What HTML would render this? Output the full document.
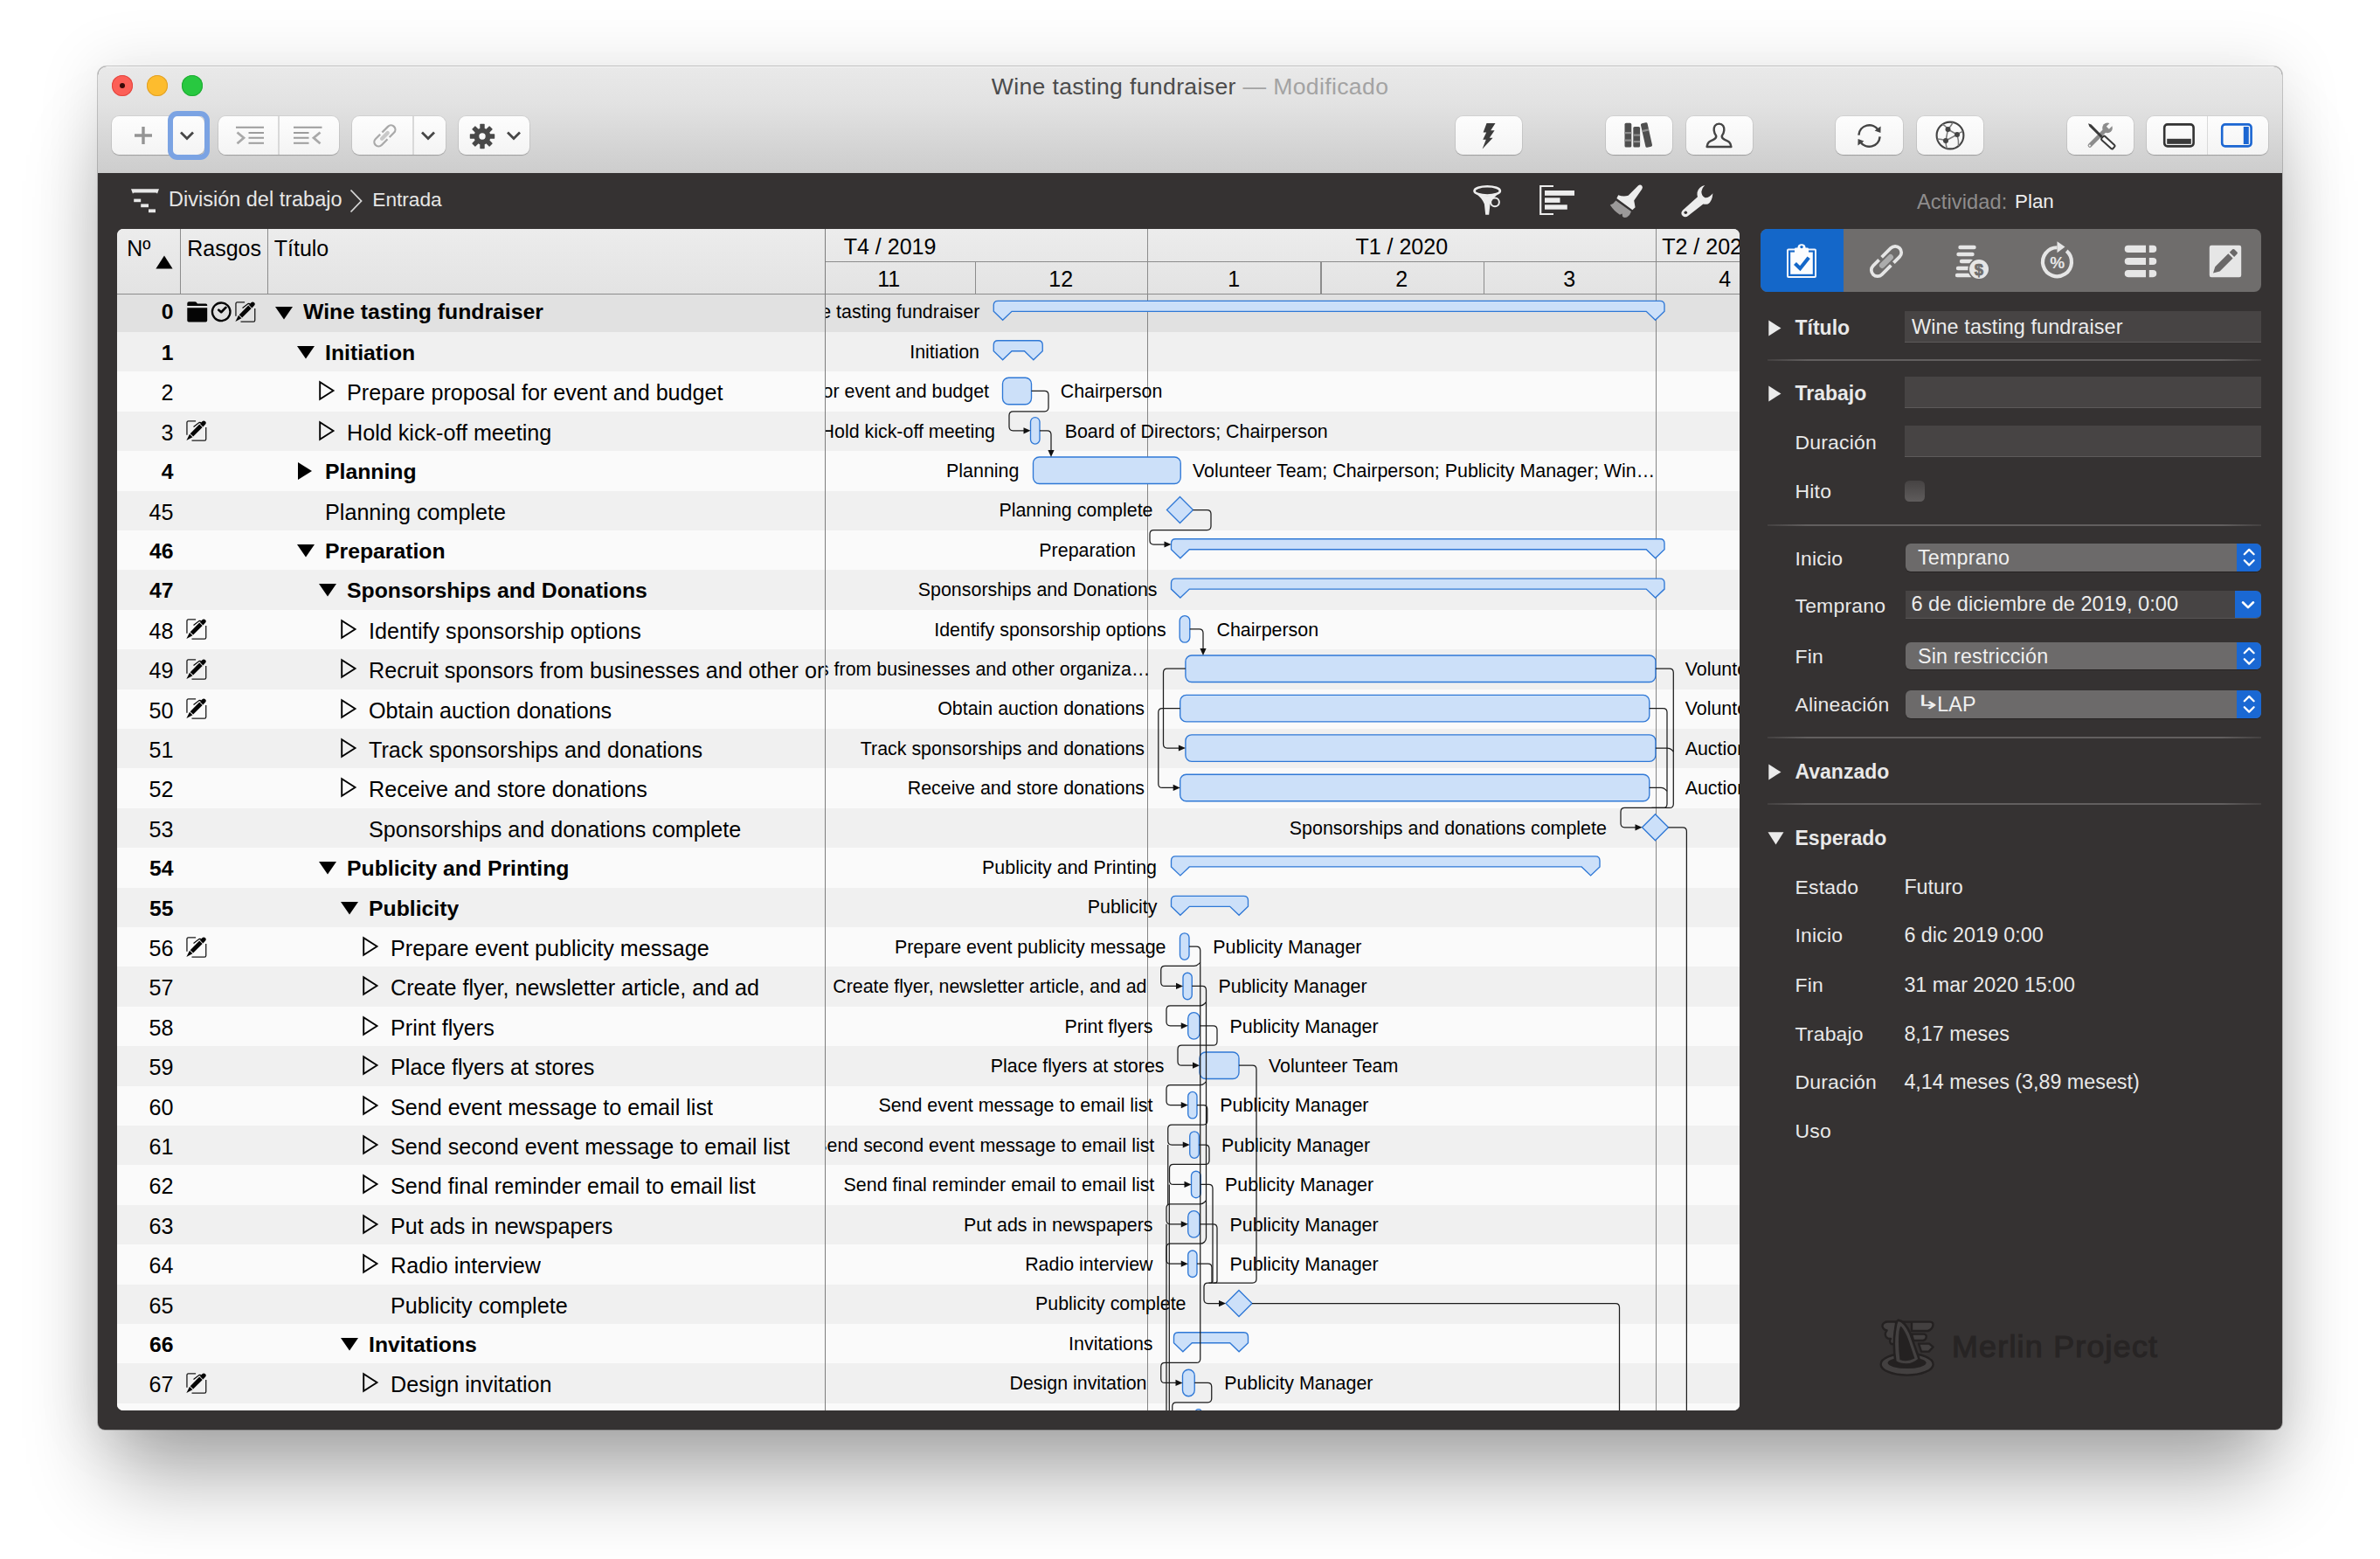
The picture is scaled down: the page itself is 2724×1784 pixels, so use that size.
<!DOCTYPE html>
<html lang="es"><head><meta charset="utf-8"><title>Wine tasting fundraiser</title>
<style>
*{box-sizing:border-box;margin:0;padding:0}
html,body{width:2724px;height:1784px;background:#fff}
body{position:relative;font-family:"Liberation Sans",Arial,sans-serif;color:#000}
.abs{position:absolute}
#win{position:absolute;left:112px;top:76px;width:2500px;height:1559.5px;border-radius:10px 10px 8px 8px;background:#353232;
 box-shadow:0 0 0 1px rgba(0,0,0,.2),0 70px 90px -16px rgba(0,0,0,.32),0 0 70px 4px rgba(0,0,0,.10);overflow:hidden}
#tbar{position:absolute;left:0;top:0;width:2500px;height:121.5px;background:linear-gradient(#e9e9e9 0%,#e2e2e2 35%,#d3d3d3 80%,#cdcdcd 100%);border-top:1px solid #f6f6f6}
.tl{position:absolute;top:86px;width:24px;height:24px;border-radius:12px}
#title{position:absolute;left:112px;width:2500px;top:82px;height:34px;line-height:34px;text-align:center;font-size:26.6px;letter-spacing:.35px;color:#4b4b4b;white-space:nowrap}
#title span{color:#a3a3a3}
.btn{position:absolute;top:133px;height:44px;border-radius:8.5px;background:linear-gradient(#fdfdfd,#f4f4f4);box-shadow:0 0 0 1px rgba(0,0,0,.06),0 1px 1px rgba(0,0,0,.2)}
.sep{position:absolute;top:133px;height:44px;width:1.5px;background:#d9d9d9}
.bi{position:absolute;overflow:visible}
#panel{position:absolute;left:134.25px;top:262px;width:1856.25px;height:1352.4px;border-radius:7px;background:#fafafa;overflow:hidden}
#hdr{position:absolute;left:0;top:0;width:100%;height:75px;background:linear-gradient(#ececec,#e3e3e3);border-bottom:1.5px solid #8c8c8c;z-index:3}
.hl{position:absolute;background:#8c8c8c}
.ht{position:absolute;font-size:25px;line-height:30px;white-space:nowrap;color:#000}
.row{position:absolute;left:0;width:1856.25px;height:45.4px;background:#fafafa;font-size:25.15px;line-height:45.4px;white-space:nowrap}
.row.odd{background:#f0f0f0}
.row.sel{background:#e1e1e1}
.row.bd{font-weight:bold;font-size:24.75px}
.row .n{position:absolute;right:1792px;top:2px}
.row .t{position:absolute;top:2px;overflow:hidden}
.row.bd .n,.row.bd .t{top:1px}
.row.sel .n,.row.sel .t{top:-.3px}
.row .ic{position:absolute;top:10.5px}
.row .tr{position:absolute}
.row svg.tr[height="16"]{top:15px}
.row svg.tr[height="22"]{top:11.5px}
.row svg.tr[height="24"]{top:10px}
#gantt{position:absolute;left:810.25px;top:0;width:1046px;height:1352.4px;overflow:hidden}
#gantt svg.g{position:absolute;left:0;top:75px}
.b{fill:#cce0f9;stroke:#2f78d6;stroke-width:1.35}
.l{fill:none;stroke:#1c1c1c;stroke-width:1.25}
.a{fill:#111}
.gl,.gr{position:absolute;margin-top:0.8px;font-size:21.42px;line-height:45.4px;white-space:nowrap;color:#000}
.vl{position:absolute;top:0;width:1.5px;height:1352.4px;background:#7d7d7d;z-index:4}
/* inspector */
.il{position:absolute;left:2054.5px;font-size:22.95px;line-height:30px;color:#e9e9e9;white-space:nowrap;letter-spacing:.2px}
.il.b{font-weight:bold;font-size:23px;letter-spacing:0}
.iv{position:absolute;left:2179.4px;font-size:23.3px;line-height:30px;color:#e9e9e9;white-space:nowrap;letter-spacing:0}
.fld{position:absolute;left:2180px;width:408px;height:35.5px;background:#474444;border-bottom:1px solid #5d5a5a;font-size:23.4px;line-height:36px;color:#ececec;padding-left:8px;letter-spacing:.1px;white-space:nowrap}
.pop{position:absolute;left:2181px;width:407px;height:31.5px;border-radius:6px;background:#6c6a6a;font-size:23.3px;line-height:32px;color:#f0f0f0;padding-left:14px;overflow:hidden;white-space:nowrap;letter-spacing:.2px;box-shadow:0 1px 0 rgba(0,0,0,.3)}
.pop i{position:absolute;right:0;top:0;width:28.5px;height:100%;background:#1a68d3}
.isep{position:absolute;left:2023px;width:565px;height:2px;background:linear-gradient(90deg,rgba(98,95,95,.3),#625f5f 8%,#625f5f 92%,rgba(98,95,95,.3))}
.itri{position:absolute;left:2023.5px}
</style></head><body>
<div id="win"><div id="tbar"></div></div>
<div class="tl" style="left:128px;background:#fc5f57;box-shadow:inset 0 0 0 1px #e2463f"></div>
<div class="abs" style="left:137px;top:95px;width:6px;height:6px;border-radius:3px;background:#3a0a08"></div>
<div class="tl" style="left:168px;background:#fdbc2e;box-shadow:inset 0 0 0 1px #e0a028"></div>
<div class="tl" style="left:208px;background:#28c840;box-shadow:inset 0 0 0 1px #1fab33"></div>
<div id="title">Wine tasting fundraiser <span>— Modificado</span></div>

<!-- toolbar buttons -->
<div class="btn" style="left:127.5px;width:106.5px"></div>
<div class="abs" style="left:192px;top:127px;width:47.5px;height:56px;border:6px solid #7ba3e3;border-radius:11px"></div>
<div class="btn" style="left:249.5px;width:138.5px"></div><div class="sep" style="left:318px"></div>
<div class="btn" style="left:403px;width:107px"></div><div class="sep" style="left:472px"></div>
<div class="btn" style="left:525px;width:80.75px"></div>
<div class="btn" style="left:1665.75px;width:76.25px"></div>
<div class="btn" style="left:1837.5px;width:76.5px"></div>
<div class="btn" style="left:1929.5px;width:76.5px"></div>
<div class="btn" style="left:2101.25px;width:76.75px"></div>
<div class="btn" style="left:2194px;width:76px"></div>
<div class="btn" style="left:2365.75px;width:76.25px"></div>
<div class="btn" style="left:2457.25px;width:138.75px"></div><div class="sep" style="left:2525.5px"></div>
<!-- plus -->
<svg class="bi" style="left:151px;top:142px" width="26" height="26" viewBox="0 0 26 26"><path d="M13 3 V23 M3 13 H23" stroke="#949494" stroke-width="3.4" fill="none"/></svg>
<!-- chevrons -->
<svg class="bi" style="left:203px;top:147px" width="22" height="16" viewBox="0 0 22 16"><path d="M4 4.6 L11 11.6 L18 4.6" stroke="#474747" stroke-width="2.8" fill="none"/></svg>
<svg class="bi" style="left:478.5px;top:147px" width="22" height="16" viewBox="0 0 22 16"><path d="M4 4.6 L11 11.6 L18 4.6" stroke="#474747" stroke-width="2.8" fill="none"/></svg>
<svg class="bi" style="left:577px;top:146.5px" width="22" height="16" viewBox="0 0 22 16"><path d="M4 4.6 L11 11.6 L18 4.6" stroke="#474747" stroke-width="2.8" fill="none"/></svg>
<!-- indent -->
<svg class="bi" style="left:268px;top:142px" width="36" height="26" viewBox="0 0 36 26"><g stroke="#9c9c9c" stroke-width="2" fill="none"><path d="M2 3.8 H34 M16.5 10 H34 M16.5 15.7 H34 M16.5 21.8 H34"/><path d="M3.5 9.5 L11 15.8 L3.5 22.2" stroke="#a9a9a9" stroke-width="2.8"/></g></svg>
<!-- outdent -->
<svg class="bi" style="left:333.8px;top:142px" width="36" height="26" viewBox="0 0 36 26"><g stroke="#9c9c9c" stroke-width="2" fill="none"><path d="M2 3.8 H34.5 M2 10 H19.5 M2 15.7 H19.5 M2 21.8 H19.5"/><path d="M32.5 9.5 L25 15.8 L32.5 22.2" stroke="#a9a9a9" stroke-width="2.8"/></g></svg>
<!-- link grey -->
<svg class="bi" style="left:423.6px;top:138.8px" width="32.8" height="32.8" viewBox="0 0 36 36"><g transform="rotate(-45 18 18)"><rect x="1.6" y="12.6" width="32.8" height="10.8" rx="5.4" fill="none" stroke="#a9a9a9" stroke-width="2.5"/><rect x="15.2" y="10" width="3.4" height="5" fill="#f9f9f9"/><rect x="17.4" y="21" width="3.4" height="5" fill="#f9f9f9"/><rect x="10.5" y="15.6" width="15" height="4.8" rx="2.4" fill="#c9c9c9"/></g></svg>
<!-- gear -->
<svg class="bi" style="left:536.5px;top:140.5px" width="30" height="30" viewBox="-15 -15 30 30"><g fill="#484848"><rect x="-2.7" y="-14.2" width="5.4" height="7" rx="0.6" transform="rotate(0)"/><rect x="-2.7" y="-14.2" width="5.4" height="7" rx="0.6" transform="rotate(45)"/><rect x="-2.7" y="-14.2" width="5.4" height="7" rx="0.6" transform="rotate(90)"/><rect x="-2.7" y="-14.2" width="5.4" height="7" rx="0.6" transform="rotate(135)"/><rect x="-2.7" y="-14.2" width="5.4" height="7" rx="0.6" transform="rotate(180)"/><rect x="-2.7" y="-14.2" width="5.4" height="7" rx="0.6" transform="rotate(225)"/><rect x="-2.7" y="-14.2" width="5.4" height="7" rx="0.6" transform="rotate(270)"/><rect x="-2.7" y="-14.2" width="5.4" height="7" rx="0.6" transform="rotate(315)"/></g><circle r="6.6" fill="none" stroke="#484848" stroke-width="5.8"/></svg>
<!-- lightning -->
<svg class="bi" style="left:1692px;top:139px" width="24" height="33" viewBox="0 0 24 33"><path d="M9.5 2 L19.5 2 L14.2 10.2 L18.6 10.2 L12.8 18.8 L16.6 18.8 L4.6 31.5 L8.8 20.8 L5.2 20.8 L9.2 12.6 L5.6 12.6 Z" fill="#3c3c3c"/></svg>
<!-- books -->
<svg class="bi" style="left:1858px;top:139px" width="36" height="32" viewBox="0 0 36 32"><g fill="#4f4f4f"><rect x="1.5" y="1.8" width="7.8" height="27.8" rx="1.6"/><rect x="11.3" y="6" width="7.8" height="23.6" rx="1.6"/><rect x="22.6" y="1.4" width="7.8" height="28.2" rx="1.6" transform="rotate(-12.5 26.5 15.6)"/><rect x="22.6" y="9" width="7.8" height="2.2" fill="#8c8c8c" transform="rotate(-12.5 26.5 15.6)"/></g><g fill="#8c8c8c"><rect x="1.5" y="12" width="7.8" height="2.2"/><rect x="1.5" y="20.5" width="7.8" height="2.2"/><rect x="11.3" y="14.5" width="7.8" height="2.2"/><rect x="11.3" y="22" width="7.8" height="2.2"/></g></svg>
<!-- person -->
<svg class="bi" style="left:1951px;top:139px" width="33" height="32" viewBox="0 0 33 32"><path d="M16.5 2.6 C12.2 2.6 10.3 6 10.7 10.2 C11 13.4 12.2 15.2 13.2 16.4 C13.6 18.6 12.6 19.6 10 20.8 C6 22.6 3.2 23.6 2.6 29 H30.4 C29.8 23.6 27 22.6 23 20.8 C20.4 19.6 19.4 18.6 19.8 16.4 C20.8 15.2 22 13.4 22.3 10.2 C22.7 6 20.8 2.6 16.5 2.6 Z" fill="none" stroke="#444" stroke-width="2.4" stroke-linejoin="round"/></svg>
<!-- refresh -->
<svg class="bi" style="left:2123px;top:139px" width="33" height="33" viewBox="0 0 33 33"><g fill="none" stroke="#444" stroke-width="2.5"><path d="M4.4 15.6 A12.2 12.2 0 0 1 26.8 9.8"/><path d="M28.6 17.4 A12.2 12.2 0 0 1 6.2 23.2"/></g><path d="M29.6 5.6 L29.4 13 L22.6 10.6 Z M3.4 27.4 L3.6 20 L10.4 22.4 Z" fill="#444"/></svg>
<!-- network globe -->
<svg class="bi" style="left:2214px;top:137px" width="36" height="36" viewBox="0 0 36 36"><g fill="none" stroke="#444" stroke-width="2.1"><circle cx="18" cy="18" r="15.4"/><path stroke="#7a7a7a" stroke-width="1.5" d="M15.5 11 L26 17 M15.5 11 L13 24 M26 17 L13 24 M15.5 11 Q12 6 9 5.5 M15.5 11 Q20 6 21 3 M26 17 Q30 14 32.5 13.5 M26 17 Q28 24 27.5 30 M13 24 Q8 22 3.5 22 M13 24 Q13 30 14.5 33"/></g><g fill="#444"><circle cx="15.5" cy="11" r="3"/><circle cx="26" cy="17" r="3"/><circle cx="13" cy="24" r="3"/></g></svg>
<!-- tools -->
<svg class="bi" style="left:2387px;top:139px" width="34" height="33" viewBox="0 0 34 33"><path d="M5 27.4 L21 11.4" stroke="#8c8c8c" stroke-width="4.8" stroke-linecap="round" fill="none"/><circle cx="25" cy="7.4" r="5.8" fill="#8c8c8c"/><rect x="22.9" y="-1" width="4.4" height="8" fill="#f9f9f9" transform="rotate(45 25 7.4)"/><circle cx="4.8" cy="27.6" r="1.1" fill="#f9f9f9"/><path d="M3 2.2 L6.6 3.6 L19.6 16.8 L17.6 18.8 L4.4 5.8 Z" fill="#3a3a3a"/><g transform="rotate(42.5 19 17.8)"><rect x="19.5" y="15" width="17.5" height="5.6" rx="1.4" fill="#fbfbfb" stroke="#3a3a3a" stroke-width="2"/></g></svg>
<!-- bottom panel -->
<svg class="bi" style="left:2474px;top:139px" width="40" height="32" viewBox="0 0 40 32"><rect x="3.2" y="3.4" width="33.4" height="25" rx="3.6" fill="none" stroke="#333" stroke-width="2.6"/><rect x="6.2" y="19.8" width="27.6" height="6" fill="#3a3a3a"/></svg>
<!-- right panel -->
<svg class="bi" style="left:2540px;top:139px" width="40" height="32" viewBox="0 0 40 32"><rect x="3.2" y="3.4" width="33.4" height="25" rx="3.6" fill="none" stroke="#1b66d2" stroke-width="2.6"/><rect x="27.8" y="6" width="6" height="20" fill="#1b66d2"/></svg>


<!-- dark bar -->
<!-- WBS icon -->
<svg class="abs" style="left:149px;top:214px" width="34" height="32" viewBox="0 0 34 32"><g fill="#e8e8e8"><path d="M1 2.2 H33 L31 7.8 Q30.6 6.6 29 6.6 H5 Q3.4 6.6 3 7.8 Z"/><rect x="4.2" y="13.6" width="8" height="3.6"/><rect x="12.2" y="19.4" width="8.8" height="3.8"/><rect x="21" y="25.4" width="8" height="3.8"/></g></svg>
<!-- funnel -->
<svg class="abs" style="left:1684px;top:210px" width="38" height="38" viewBox="0 0 38 38"><g fill="none" stroke="#ededed"><ellipse cx="18.2" cy="8.4" rx="14.7" ry="5.1" stroke-width="2.6"/><circle cx="27" cy="21.3" r="4.9" stroke-width="2"/></g><path d="M3.4 10 Q10 14.2 18.2 14.2 Q26.4 14.2 33 10 Q24 16.5 21.5 23.5 L20.2 35.7 H16.2 L14.9 23.5 Q12.4 16.5 3.4 10 Z" fill="#ededed"/></svg>
<!-- gantt bars -->
<svg class="abs" style="left:1760px;top:210px" width="44" height="38" viewBox="0 0 44 38"><path d="M18 3 H3.2 V35 H18" fill="none" stroke="#ededed" stroke-width="2.2"/><g fill="#ededed"><rect x="8" y="8" width="34" height="5.8"/><rect x="8" y="16.3" width="17.5" height="5.6"/><rect x="8" y="24.3" width="25.8" height="5.4"/></g></svg>
<!-- brush -->
<svg class="abs" style="left:1841px;top:210px" width="42" height="42" viewBox="0 0 42 42"><path d="M33.9 2.4 Q36.4 0.6 38.2 2.6 Q39.6 4.4 38.4 6.2 L29.2 19.6 L30.6 27.2 L27.4 30.2 L9.4 17 L11.2 13.2 Q17 15.6 22.6 13.8 Z" fill="#ededed"/><path d="M8.4 19.4 L26 32 Q24.6 36.6 21.2 38.6 Q18 39.8 16 37.8 L15.6 34.4 L13 35.8 Q6.4 31.8 1.8 24.6 Q6 23 8.4 19.4 Z" fill="#9b9999"/></svg>
<!-- wrench -->
<svg class="abs" style="left:1921px;top:209px" width="42" height="42" viewBox="0 0 42 42"><path d="M30.3 3 Q23.4 4.4 21.6 11 Q21.2 14 22 16.2 L5 31.4 Q1.8 34.8 4.8 38 Q8 40.8 11.4 37.8 L28.4 24.6 Q31 25.2 33.8 24.4 Q38.6 21.8 39.4 12.2 Q35 17.6 30.6 17.2 Q26 15 26.4 10 Q27 5.8 30.3 3 Z" fill="#ededed"/><circle cx="8.3" cy="34.2" r="1.8" fill="#353232"/></svg>

<div class="abs" style="left:193px;top:213px;font-size:23.5px;line-height:30px;color:#e6e6e6;white-space:nowrap">División del trabajo</div>
<svg class="abs" style="left:399px;top:215px" width="18" height="30" viewBox="0 0 18 30"><path d="M2.5 2.5 L14.5 15 L2.5 27.5" fill="none" stroke="#d6d6d6" stroke-width="1.8"/></svg>
<div class="abs" style="left:426.25px;top:213px;font-size:22.7px;line-height:30px;color:#e6e6e6;white-space:nowrap">Entrada</div>
<div class="abs" style="left:2194px;top:216px;font-size:23.6px;line-height:30px;color:#8f8d8d;white-space:nowrap;letter-spacing:.1px">Actividad:</div>
<div class="abs" style="left:2306px;top:216px;font-size:22.4px;line-height:30px;color:#ededed;white-space:nowrap">Plan</div>

<!-- table + gantt panel -->
<div id="panel">
<div class="row sel bd" style="top:72.6px"><span class="n">0</span><svg class="ic" style="left:79.5px" width="24" height="24" viewBox="0 0 24 24"><path d="M0.3 2.2 Q0.3 0.3 2.2 0.3 H9 Q10.5 0.3 11.2 1.4 L12 2.5 H21.6 Q23.2 2.5 23.2 4 V4.9 H0.3 Z M0.3 7.3 H23.2 V21.8 Q23.2 23.6 21.4 23.6 H2.1 Q0.3 23.6 0.3 21.8 Z" fill="#050505"/></svg><svg class="ic" style="left:107.2px" width="24" height="24" viewBox="0 0 24 24"><circle cx="12.2" cy="11.8" r="10.3" fill="none" stroke="#050505" stroke-width="2.3"/><path d="M9.3 9.8 L12.2 12.2 L17.4 6.9" fill="none" stroke="#050505" stroke-width="2.7" stroke-linecap="round" stroke-linejoin="round"/></svg><svg class="ic" style="left:135.2px" width="24" height="24" viewBox="0 0 24 24"><path d="M0.95 16.8 V2.6 Q0.95 0.95 2.6 0.95 H11.1 M22.75 8 V21.4 Q22.75 23.05 21.1 23.05 H6.5" fill="none" stroke="#1a1a1a" stroke-width="1.3"/><g transform="translate(0.4 22.9) rotate(-45)" fill="#050505"><path d="M0 0 L7.5 -2.45 V2.45 Z"/><rect x="8.5" y="-2.45" width="14.9" height="4.9"/><path d="M24.4 -2.45 H28 A2.45 2.45 0 0 1 28 2.45 H24.4 Z"/><path d="M16.7 -5.2 L25 -4.1 L26.4 -2.3" fill="none" stroke="#050505" stroke-width="1.3"/></g></svg><svg class="tr" style="left:179.8px" width="22" height="16" viewBox="0 0 22 16"><path d="M1 1 H21 L11 15.5 Z" fill="#000"/></svg><span class="t" style="left:212.8px;max-width:596.8px">Wine tasting fundraiser</span></div>
<div class="row odd bd" style="top:118.0px"><span class="n">1</span><svg class="tr" style="left:204.8px" width="22" height="16" viewBox="0 0 22 16"><path d="M1 1 H21 L11 15.5 Z" fill="#000"/></svg><span class="t" style="left:237.8px;max-width:571.8px">Initiation</span></div>
<div class="row" style="top:163.4px"><span class="n">2</span><svg class="tr" style="left:230.2px" width="20" height="24" viewBox="0 0 20 24"><path d="M2.2 2.2 V21.8 L17.5 12 Z" fill="none" stroke="#000" stroke-width="1.9" stroke-linejoin="miter"/></svg><span class="t" style="left:262.8px;max-width:546.8px">Prepare proposal for event and budget</span></div>
<div class="row odd" style="top:208.8px"><span class="n">3</span><svg class="ic" style="left:79.2px" width="24" height="24" viewBox="0 0 24 24"><path d="M0.95 16.8 V2.6 Q0.95 0.95 2.6 0.95 H11.1 M22.75 8 V21.4 Q22.75 23.05 21.1 23.05 H6.5" fill="none" stroke="#1a1a1a" stroke-width="1.3"/><g transform="translate(0.4 22.9) rotate(-45)" fill="#050505"><path d="M0 0 L7.5 -2.45 V2.45 Z"/><rect x="8.5" y="-2.45" width="14.9" height="4.9"/><path d="M24.4 -2.45 H28 A2.45 2.45 0 0 1 28 2.45 H24.4 Z"/><path d="M16.7 -5.2 L25 -4.1 L26.4 -2.3" fill="none" stroke="#050505" stroke-width="1.3"/></g></svg><svg class="tr" style="left:230.2px" width="20" height="24" viewBox="0 0 20 24"><path d="M2.2 2.2 V21.8 L17.5 12 Z" fill="none" stroke="#000" stroke-width="1.9" stroke-linejoin="miter"/></svg><span class="t" style="left:262.8px;max-width:546.8px">Hold kick-off meeting</span></div>
<div class="row bd" style="top:254.2px"><span class="n">4</span><svg class="tr" style="left:205.8px" width="18" height="22" viewBox="0 0 18 22"><path d="M1 1 V21 L17 11 Z" fill="#000"/></svg><span class="t" style="left:237.8px;max-width:571.8px">Planning</span></div>
<div class="row odd" style="top:299.6px"><span class="n">45</span><span class="t" style="left:237.8px;max-width:571.8px">Planning complete</span></div>
<div class="row bd" style="top:345.0px"><span class="n">46</span><svg class="tr" style="left:204.8px" width="22" height="16" viewBox="0 0 22 16"><path d="M1 1 H21 L11 15.5 Z" fill="#000"/></svg><span class="t" style="left:237.8px;max-width:571.8px">Preparation</span></div>
<div class="row odd bd" style="top:390.4px"><span class="n">47</span><svg class="tr" style="left:229.8px" width="22" height="16" viewBox="0 0 22 16"><path d="M1 1 H21 L11 15.5 Z" fill="#000"/></svg><span class="t" style="left:262.8px;max-width:546.8px">Sponsorships and Donations</span></div>
<div class="row" style="top:435.8px"><span class="n">48</span><svg class="ic" style="left:79.2px" width="24" height="24" viewBox="0 0 24 24"><path d="M0.95 16.8 V2.6 Q0.95 0.95 2.6 0.95 H11.1 M22.75 8 V21.4 Q22.75 23.05 21.1 23.05 H6.5" fill="none" stroke="#1a1a1a" stroke-width="1.3"/><g transform="translate(0.4 22.9) rotate(-45)" fill="#050505"><path d="M0 0 L7.5 -2.45 V2.45 Z"/><rect x="8.5" y="-2.45" width="14.9" height="4.9"/><path d="M24.4 -2.45 H28 A2.45 2.45 0 0 1 28 2.45 H24.4 Z"/><path d="M16.7 -5.2 L25 -4.1 L26.4 -2.3" fill="none" stroke="#050505" stroke-width="1.3"/></g></svg><svg class="tr" style="left:255.2px" width="20" height="24" viewBox="0 0 20 24"><path d="M2.2 2.2 V21.8 L17.5 12 Z" fill="none" stroke="#000" stroke-width="1.9" stroke-linejoin="miter"/></svg><span class="t" style="left:287.8px;max-width:521.8px">Identify sponsorship options</span></div>
<div class="row odd" style="top:481.2px"><span class="n">49</span><svg class="ic" style="left:79.2px" width="24" height="24" viewBox="0 0 24 24"><path d="M0.95 16.8 V2.6 Q0.95 0.95 2.6 0.95 H11.1 M22.75 8 V21.4 Q22.75 23.05 21.1 23.05 H6.5" fill="none" stroke="#1a1a1a" stroke-width="1.3"/><g transform="translate(0.4 22.9) rotate(-45)" fill="#050505"><path d="M0 0 L7.5 -2.45 V2.45 Z"/><rect x="8.5" y="-2.45" width="14.9" height="4.9"/><path d="M24.4 -2.45 H28 A2.45 2.45 0 0 1 28 2.45 H24.4 Z"/><path d="M16.7 -5.2 L25 -4.1 L26.4 -2.3" fill="none" stroke="#050505" stroke-width="1.3"/></g></svg><svg class="tr" style="left:255.2px" width="20" height="24" viewBox="0 0 20 24"><path d="M2.2 2.2 V21.8 L17.5 12 Z" fill="none" stroke="#000" stroke-width="1.9" stroke-linejoin="miter"/></svg><span class="t" style="left:287.8px;max-width:521.8px">Recruit sponsors from businesses and other organizations</span></div>
<div class="row" style="top:526.6px"><span class="n">50</span><svg class="ic" style="left:79.2px" width="24" height="24" viewBox="0 0 24 24"><path d="M0.95 16.8 V2.6 Q0.95 0.95 2.6 0.95 H11.1 M22.75 8 V21.4 Q22.75 23.05 21.1 23.05 H6.5" fill="none" stroke="#1a1a1a" stroke-width="1.3"/><g transform="translate(0.4 22.9) rotate(-45)" fill="#050505"><path d="M0 0 L7.5 -2.45 V2.45 Z"/><rect x="8.5" y="-2.45" width="14.9" height="4.9"/><path d="M24.4 -2.45 H28 A2.45 2.45 0 0 1 28 2.45 H24.4 Z"/><path d="M16.7 -5.2 L25 -4.1 L26.4 -2.3" fill="none" stroke="#050505" stroke-width="1.3"/></g></svg><svg class="tr" style="left:255.2px" width="20" height="24" viewBox="0 0 20 24"><path d="M2.2 2.2 V21.8 L17.5 12 Z" fill="none" stroke="#000" stroke-width="1.9" stroke-linejoin="miter"/></svg><span class="t" style="left:287.8px;max-width:521.8px">Obtain auction donations</span></div>
<div class="row odd" style="top:572.0px"><span class="n">51</span><svg class="tr" style="left:255.2px" width="20" height="24" viewBox="0 0 20 24"><path d="M2.2 2.2 V21.8 L17.5 12 Z" fill="none" stroke="#000" stroke-width="1.9" stroke-linejoin="miter"/></svg><span class="t" style="left:287.8px;max-width:521.8px">Track sponsorships and donations</span></div>
<div class="row" style="top:617.4px"><span class="n">52</span><svg class="tr" style="left:255.2px" width="20" height="24" viewBox="0 0 20 24"><path d="M2.2 2.2 V21.8 L17.5 12 Z" fill="none" stroke="#000" stroke-width="1.9" stroke-linejoin="miter"/></svg><span class="t" style="left:287.8px;max-width:521.8px">Receive and store donations</span></div>
<div class="row odd" style="top:662.8px"><span class="n">53</span><span class="t" style="left:287.8px;max-width:521.8px">Sponsorships and donations complete</span></div>
<div class="row bd" style="top:708.2px"><span class="n">54</span><svg class="tr" style="left:229.8px" width="22" height="16" viewBox="0 0 22 16"><path d="M1 1 H21 L11 15.5 Z" fill="#000"/></svg><span class="t" style="left:262.8px;max-width:546.8px">Publicity and Printing</span></div>
<div class="row odd bd" style="top:753.6px"><span class="n">55</span><svg class="tr" style="left:254.8px" width="22" height="16" viewBox="0 0 22 16"><path d="M1 1 H21 L11 15.5 Z" fill="#000"/></svg><span class="t" style="left:287.8px;max-width:521.8px">Publicity</span></div>
<div class="row" style="top:799.0px"><span class="n">56</span><svg class="ic" style="left:79.2px" width="24" height="24" viewBox="0 0 24 24"><path d="M0.95 16.8 V2.6 Q0.95 0.95 2.6 0.95 H11.1 M22.75 8 V21.4 Q22.75 23.05 21.1 23.05 H6.5" fill="none" stroke="#1a1a1a" stroke-width="1.3"/><g transform="translate(0.4 22.9) rotate(-45)" fill="#050505"><path d="M0 0 L7.5 -2.45 V2.45 Z"/><rect x="8.5" y="-2.45" width="14.9" height="4.9"/><path d="M24.4 -2.45 H28 A2.45 2.45 0 0 1 28 2.45 H24.4 Z"/><path d="M16.7 -5.2 L25 -4.1 L26.4 -2.3" fill="none" stroke="#050505" stroke-width="1.3"/></g></svg><svg class="tr" style="left:280.2px" width="20" height="24" viewBox="0 0 20 24"><path d="M2.2 2.2 V21.8 L17.5 12 Z" fill="none" stroke="#000" stroke-width="1.9" stroke-linejoin="miter"/></svg><span class="t" style="left:312.8px;max-width:496.8px">Prepare event publicity message</span></div>
<div class="row odd" style="top:844.4px"><span class="n">57</span><svg class="tr" style="left:280.2px" width="20" height="24" viewBox="0 0 20 24"><path d="M2.2 2.2 V21.8 L17.5 12 Z" fill="none" stroke="#000" stroke-width="1.9" stroke-linejoin="miter"/></svg><span class="t" style="left:312.8px;max-width:496.8px">Create flyer, newsletter article, and ad</span></div>
<div class="row" style="top:889.8px"><span class="n">58</span><svg class="tr" style="left:280.2px" width="20" height="24" viewBox="0 0 20 24"><path d="M2.2 2.2 V21.8 L17.5 12 Z" fill="none" stroke="#000" stroke-width="1.9" stroke-linejoin="miter"/></svg><span class="t" style="left:312.8px;max-width:496.8px">Print flyers</span></div>
<div class="row odd" style="top:935.2px"><span class="n">59</span><svg class="tr" style="left:280.2px" width="20" height="24" viewBox="0 0 20 24"><path d="M2.2 2.2 V21.8 L17.5 12 Z" fill="none" stroke="#000" stroke-width="1.9" stroke-linejoin="miter"/></svg><span class="t" style="left:312.8px;max-width:496.8px">Place flyers at stores</span></div>
<div class="row" style="top:980.6px"><span class="n">60</span><svg class="tr" style="left:280.2px" width="20" height="24" viewBox="0 0 20 24"><path d="M2.2 2.2 V21.8 L17.5 12 Z" fill="none" stroke="#000" stroke-width="1.9" stroke-linejoin="miter"/></svg><span class="t" style="left:312.8px;max-width:496.8px">Send event message to email list</span></div>
<div class="row odd" style="top:1026.0px"><span class="n">61</span><svg class="tr" style="left:280.2px" width="20" height="24" viewBox="0 0 20 24"><path d="M2.2 2.2 V21.8 L17.5 12 Z" fill="none" stroke="#000" stroke-width="1.9" stroke-linejoin="miter"/></svg><span class="t" style="left:312.8px;max-width:496.8px">Send second event message to email list</span></div>
<div class="row" style="top:1071.4px"><span class="n">62</span><svg class="tr" style="left:280.2px" width="20" height="24" viewBox="0 0 20 24"><path d="M2.2 2.2 V21.8 L17.5 12 Z" fill="none" stroke="#000" stroke-width="1.9" stroke-linejoin="miter"/></svg><span class="t" style="left:312.8px;max-width:496.8px">Send final reminder email to email list</span></div>
<div class="row odd" style="top:1116.8px"><span class="n">63</span><svg class="tr" style="left:280.2px" width="20" height="24" viewBox="0 0 20 24"><path d="M2.2 2.2 V21.8 L17.5 12 Z" fill="none" stroke="#000" stroke-width="1.9" stroke-linejoin="miter"/></svg><span class="t" style="left:312.8px;max-width:496.8px">Put ads in newspapers</span></div>
<div class="row" style="top:1162.2px"><span class="n">64</span><svg class="tr" style="left:280.2px" width="20" height="24" viewBox="0 0 20 24"><path d="M2.2 2.2 V21.8 L17.5 12 Z" fill="none" stroke="#000" stroke-width="1.9" stroke-linejoin="miter"/></svg><span class="t" style="left:312.8px;max-width:496.8px">Radio interview</span></div>
<div class="row odd" style="top:1207.6px"><span class="n">65</span><span class="t" style="left:312.8px;max-width:496.8px">Publicity complete</span></div>
<div class="row bd" style="top:1253.0px"><span class="n">66</span><svg class="tr" style="left:254.8px" width="22" height="16" viewBox="0 0 22 16"><path d="M1 1 H21 L11 15.5 Z" fill="#000"/></svg><span class="t" style="left:287.8px;max-width:521.8px">Invitations</span></div>
<div class="row odd" style="top:1298.4px"><span class="n">67</span><svg class="ic" style="left:79.2px" width="24" height="24" viewBox="0 0 24 24"><path d="M0.95 16.8 V2.6 Q0.95 0.95 2.6 0.95 H11.1 M22.75 8 V21.4 Q22.75 23.05 21.1 23.05 H6.5" fill="none" stroke="#1a1a1a" stroke-width="1.3"/><g transform="translate(0.4 22.9) rotate(-45)" fill="#050505"><path d="M0 0 L7.5 -2.45 V2.45 Z"/><rect x="8.5" y="-2.45" width="14.9" height="4.9"/><path d="M24.4 -2.45 H28 A2.45 2.45 0 0 1 28 2.45 H24.4 Z"/><path d="M16.7 -5.2 L25 -4.1 L26.4 -2.3" fill="none" stroke="#050505" stroke-width="1.3"/></g></svg><svg class="tr" style="left:280.2px" width="20" height="24" viewBox="0 0 20 24"><path d="M2.2 2.2 V21.8 L17.5 12 Z" fill="none" stroke="#000" stroke-width="1.9" stroke-linejoin="miter"/></svg><span class="t" style="left:312.8px;max-width:496.8px">Design invitation</span></div>
<div class="row" style="top:1343.8px"></div>
<div id="hdr">
 <div class="hl" style="left:71.5px;top:0;width:1.5px;height:75px"></div>
 <div class="hl" style="left:171.5px;top:0;width:1.5px;height:75px"></div>
 <div class="ht" style="left:11px;top:6.6px">Nº</div>
 <svg class="abs" style="left:44px;top:30px" width="20" height="16" viewBox="0 0 20 16"><path d="M10 0.5 L19.6 15.5 H0.4 Z" fill="#000"/></svg>
 <div class="ht" style="left:80px;top:7px">Rasgos</div>
 <div class="ht" style="left:179.5px;top:7px">Título</div>
 <!-- gantt header -->
 <div class="hl" style="left:810.25px;top:36.6px;width:1046px;height:1.5px"></div>
 <div class="hl" style="left:1178.25px;top:0;width:1.5px;height:75px"></div>
 <div class="hl" style="left:1760.5px;top:0;width:1.5px;height:75px"></div>
 <div class="hl" style="left:981.25px;top:37px;width:1.5px;height:38px"></div>
 <div class="hl" style="left:1377px;top:37px;width:1.5px;height:38px"></div>
 <div class="hl" style="left:1563.25px;top:37px;width:1.5px;height:38px"></div>
 <div class="ht" style="left:831.5px;top:5.2px">T4 / 2019</div>
 <div class="ht" style="left:1179px;width:582px;text-align:center;top:5.2px">T1 / 2020</div>
 <div class="ht" style="left:1768px;top:5.2px">T2 / 2020</div>
 <div class="ht" style="left:833px;width:100px;text-align:center;top:41.5px">11</div>
 <div class="ht" style="left:1030px;width:100px;text-align:center;top:41.5px">12</div>
 <div class="ht" style="left:1228px;width:100px;text-align:center;top:41.5px">1</div>
 <div class="ht" style="left:1420px;width:100px;text-align:center;top:41.5px">2</div>
 <div class="ht" style="left:1612px;width:100px;text-align:center;top:41.5px">3</div>
 <div class="ht" style="left:1790px;width:100px;text-align:center;top:41.5px">4</div>
</div>
<div id="gantt">
<div class="vl" style="left:368px;background:#858585;z-index:0"></div>
<div class="vl" style="left:950.25px;background:#858585;z-index:0"></div>
<span class="gl" style="top:72.6px;right:869.2px">Wine tasting fundraiser</span>
<span class="gl" style="top:118.0px;right:869.5px">Initiation</span>
<span class="gl" style="top:163.4px;right:858.5px">Prepare proposal for event and budget</span>
<span class="gl" style="top:208.8px;right:851.5px">Hold kick-off meeting</span>
<span class="gl" style="top:254.2px;right:824.1px">Planning</span>
<span class="gl" style="top:299.6px;right:671.0px">Planning complete</span>
<span class="gl" style="top:345.0px;right:690.5px">Preparation</span>
<span class="gl" style="top:390.4px;right:666.0px">Sponsorships and Donations</span>
<span class="gl" style="top:435.8px;right:655.9px">Identify sponsorship options</span>
<span class="gl" style="top:481.2px;right:674.2px">Recruit sponsors from businesses and other organiza…</span>
<span class="gl" style="top:526.6px;right:680.5px">Obtain auction donations</span>
<span class="gl" style="top:572.0px;right:680.5px">Track sponsorships and donations</span>
<span class="gl" style="top:617.4px;right:680.5px">Receive and store donations</span>
<span class="gl" style="top:662.8px;right:151.7px">Sponsorships and donations complete</span>
<span class="gl" style="top:708.2px;right:666.5px">Publicity and Printing</span>
<span class="gl" style="top:753.6px;right:666.0px">Publicity</span>
<span class="gl" style="top:799.0px;right:656.0px">Prepare event publicity message</span>
<span class="gl" style="top:844.4px;right:678.0px">Create flyer, newsletter article, and ad</span>
<span class="gl" style="top:889.8px;right:671.0px">Print flyers</span>
<span class="gl" style="top:935.2px;right:658.0px">Place flyers at stores</span>
<span class="gl" style="top:980.6px;right:671.0px">Send event message to email list</span>
<span class="gl" style="top:1026.0px;right:669.2px">Send second event message to email list</span>
<span class="gl" style="top:1071.4px;right:669.2px">Send final reminder email to email list</span>
<span class="gl" style="top:1116.8px;right:671.0px">Put ads in newspapers</span>
<span class="gl" style="top:1162.2px;right:671.0px">Radio interview</span>
<span class="gl" style="top:1207.6px;right:633.0px">Publicity complete</span>
<span class="gl" style="top:1253.0px;right:671.0px">Invitations</span>
<span class="gl" style="top:1298.4px;right:678.0px">Design invitation</span>
<span class="gr" style="top:163.4px;left:269.2px">Chairperson</span>
<span class="gr" style="top:208.8px;left:274.2px">Board of Directors; Chairperson</span>
<span class="gr" style="top:254.2px;left:420.5px">Volunteer Team; Chairperson; Publicity Manager; Win…</span>
<span class="gr" style="top:435.8px;left:448.0px">Chairperson</span>
<span class="gr" style="top:481.2px;left:984.2px">Volunteer Team</span>
<span class="gr" style="top:526.6px;left:984.2px">Volunteer Team</span>
<span class="gr" style="top:572.0px;left:984.2px">Auction Manager</span>
<span class="gr" style="top:617.4px;left:984.2px">Auction Manager</span>
<span class="gr" style="top:799.0px;left:443.8px">Publicity Manager</span>
<span class="gr" style="top:844.4px;left:450.0px">Publicity Manager</span>
<span class="gr" style="top:889.8px;left:463.0px">Publicity Manager</span>
<span class="gr" style="top:935.2px;left:507.5px">Volunteer Team</span>
<span class="gr" style="top:980.6px;left:451.8px">Publicity Manager</span>
<span class="gr" style="top:1026.0px;left:453.5px">Publicity Manager</span>
<span class="gr" style="top:1071.4px;left:457.5px">Publicity Manager</span>
<span class="gr" style="top:1116.8px;left:463.0px">Publicity Manager</span>
<span class="gr" style="top:1162.2px;left:463.0px">Publicity Manager</span>
<span class="gr" style="top:1298.4px;left:456.8px">Publicity Manager</span>
<svg class="g" width="1046" height="1280" viewBox="0 0 1046 1280">
<path d="M192.25 12.30 Q192.25 7.30 197.25 7.30 L955.00 7.30 Q960.00 7.30 960.00 12.30 L960.00 19.30 L949.60 29.30 L939.20 19.30 L213.05 19.30 L202.65 29.30 L192.25 19.30 Z" class="b"/>
<path d="M192.25 57.70 Q192.25 52.70 197.25 52.70 L243.25 52.70 Q248.25 52.70 248.25 57.70 L248.25 64.70 L237.85 74.70 L227.45 64.70 L213.05 64.70 L202.65 74.70 L192.25 64.70 Z" class="b"/>
<path d="M395.50 284.70 Q395.50 279.70 400.50 279.70 L955.00 279.70 Q960.00 279.70 960.00 284.70 L960.00 291.70 L949.60 301.70 L939.20 291.70 L416.30 291.70 L405.90 301.70 L395.50 291.70 Z" class="b"/>
<path d="M395.50 330.10 Q395.50 325.10 400.50 325.10 L955.00 325.10 Q960.00 325.10 960.00 330.10 L960.00 337.10 L949.60 347.10 L939.20 337.10 L416.30 337.10 L405.90 347.10 L395.50 337.10 Z" class="b"/>
<path d="M395.50 647.90 Q395.50 642.90 400.50 642.90 L881.00 642.90 Q886.00 642.90 886.00 647.90 L886.00 654.90 L875.60 664.90 L865.20 654.90 L416.30 654.90 L405.90 664.90 L395.50 654.90 Z" class="b"/>
<path d="M395.50 693.30 Q395.50 688.30 400.50 688.30 L478.50 688.30 Q483.50 688.30 483.50 693.30 L483.50 700.30 L473.10 710.30 L462.70 700.30 L416.30 700.30 L405.90 710.30 L395.50 700.30 Z" class="b"/>
<path d="M398.50 1192.70 Q398.50 1187.70 403.50 1187.70 L478.50 1187.70 Q483.50 1187.70 483.50 1192.70 L483.50 1199.70 L473.10 1209.70 L462.70 1199.70 L419.30 1199.70 L408.90 1209.70 L398.50 1199.70 Z" class="b"/>
<rect x="202.50" y="95.20" width="33.00" height="30.5" rx="7.00" class="b"/>
<rect x="234.50" y="140.60" width="10.50" height="30.5" rx="5.25" class="b"/>
<rect x="237.50" y="186.00" width="168.75" height="30.5" rx="7.00" class="b"/>
<rect x="405.20" y="367.60" width="11.60" height="30.5" rx="5.80" class="b"/>
<rect x="411.90" y="413.00" width="538.00" height="30.5" rx="7.00" class="b"/>
<rect x="405.70" y="458.40" width="537.10" height="30.5" rx="7.00" class="b"/>
<rect x="411.90" y="503.80" width="538.00" height="30.5" rx="7.00" class="b"/>
<rect x="405.70" y="549.20" width="537.10" height="30.5" rx="7.00" class="b"/>
<rect x="405.50" y="730.80" width="10.50" height="30.5" rx="5.25" class="b"/>
<rect x="409.00" y="776.20" width="10.25" height="30.5" rx="5.12" class="b"/>
<rect x="414.75" y="821.60" width="13.25" height="30.5" rx="6.62" class="b"/>
<rect x="428.00" y="867.00" width="45.00" height="30.5" rx="7.00" class="b"/>
<rect x="414.75" y="912.40" width="10.25" height="30.5" rx="5.12" class="b"/>
<rect x="416.75" y="957.80" width="10.50" height="30.5" rx="5.25" class="b"/>
<rect x="418.50" y="1003.20" width="10.75" height="30.5" rx="5.38" class="b"/>
<rect x="414.75" y="1048.60" width="13.25" height="30.5" rx="6.62" class="b"/>
<rect x="414.75" y="1094.00" width="10.25" height="30.5" rx="5.12" class="b"/>
<rect x="408.50" y="1230.20" width="13.75" height="30.5" rx="6.88" class="b"/>
<rect x="423.00" y="1275.60" width="7.50" height="30.5" rx="3.75" class="b"/>
<path d="M405.50 231.50 l15 15 l-15 15 l-15 -15 Z" class="b"/>
<path d="M949.50 594.70 l15 15 l-15 15 l-15 -15 Z" class="b"/>
<path d="M473.00 1139.50 l15 15 l-15 15 l-15 -15 Z" class="b"/>
<path d="M235.50 110.40 L250.50 110.40 Q255.00 110.40 255.00 114.90 L255.00 129.30 Q255.00 133.80 250.50 133.80 L214.50 133.80 Q210.00 133.80 210.00 138.30 L210.00 151.30 Q210.00 155.80 214.50 155.80 L229.50 155.80" class="l"/>
<path d="M234.50 155.80 l-8 -3.6 v7.2 Z" class="a"/>
<path d="M245.00 155.80 L253.50 155.80 Q258.00 155.80 258.00 160.30 L258.00 181.00" class="l"/>
<path d="M258.00 186.00 l-3.6 -8 h7.2 Z" class="a"/>
<path d="M420.50 246.60 L436.50 246.60 Q441.00 246.60 441.00 251.10 L441.00 265.00 Q441.00 269.50 436.50 269.50 L375.50 269.50 Q371.00 269.50 371.00 274.00 L371.00 281.50 Q371.00 286.00 375.50 286.00 L390.50 286.00" class="l"/>
<path d="M395.50 286.00 l-8 -3.6 v7.2 Z" class="a"/>
<path d="M416.80 382.80 L427.50 382.80 Q432.00 382.80 432.00 387.30 L432.00 408.00" class="l"/>
<path d="M432.00 413.00 l-3.6 -8 h7.2 Z" class="a"/>
<path d="M411.90 428.20 L391.00 428.20 Q386.50 428.20 386.50 432.70 L386.50 514.50 Q386.50 519.00 391.00 519.00 L406.90 519.00" class="l"/>
<path d="M411.90 519.00 l-8 -3.6 v7.2 Z" class="a"/>
<path d="M405.70 473.60 L385.30 473.60 Q380.80 473.60 380.80 478.10 L380.80 559.90 Q380.80 564.40 385.30 564.40 L400.70 564.40" class="l"/>
<path d="M405.70 564.40 l-8 -3.6 v7.2 Z" class="a"/>
<path d="M949.90 428.20 L965.80 428.20 Q970.30 428.20 970.30 432.70 L970.30 582.90 Q970.30 587.40 965.80 587.40 L914.50 587.40 Q910.00 587.40 910.00 591.90 L910.00 605.30 Q910.00 609.80 914.50 609.80 L929.50 609.80" class="l"/>
<path d="M934.50 609.80 l-8 -3.6 v7.2 Z" class="a"/>
<path d="M942.80 473.60 L958.50 473.60 Q963.00 473.60 963.00 478.10 L963.00 582.90 Q963.00 587.40 958.50 587.40 L945.50 587.40" class="l"/>
<path d="M949.90 519.00 L963.47 519.00 Q966.30 519.00 968.30 521.00 L970.30 523.00" class="l"/>
<path d="M942.80 564.40 L956.17 564.40 Q959.00 564.40 961.00 566.40 L963.00 568.40" class="l"/>
<path d="M964.50 609.80 L980.90 609.80 Q985.40 609.80 985.40 614.30 L985.40 1283.00" class="l"/>
<path d="M416.00 746.00 L424.25 746.00 Q428.75 746.00 428.75 750.50 L428.75 1217.90 Q428.75 1222.40 424.25 1222.40 L388.25 1222.40 Q383.75 1222.40 383.75 1226.90 L383.75 1240.90 Q383.75 1245.40 388.25 1245.40 L403.50 1245.40" class="l"/>
<path d="M408.50 1245.40 l-8 -3.6 v7.2 Z" class="a"/>
<path d="M428.75 764.40 L426.62 766.40 Q424.50 768.40 421.58 768.40 L388.25 768.40 Q383.75 768.40 383.75 772.90 L383.75 786.90 Q383.75 791.40 388.25 791.40 L404.00 791.40" class="l"/>
<path d="M409.00 791.40 l-8 -3.6 v7.2 Z" class="a"/>
<path d="M419.25 791.40 L431.00 791.40 Q435.50 791.40 435.50 795.90 L435.50 1079.37 Q435.50 1082.20 433.50 1084.20 L433.50 1084.20 Q431.50 1086.20 428.67 1086.20 L394.50 1086.20 Q390.00 1086.20 390.00 1090.70 L390.00 1104.70 Q390.00 1109.20 394.50 1109.20 L409.75 1109.20" class="l"/>
<path d="M414.75 1109.20 l-8 -3.6 v7.2 Z" class="a"/>
<path d="M435.50 809.80 L433.50 811.80 Q431.50 813.80 428.67 813.80 L394.50 813.80 Q390.00 813.80 390.00 818.30 L390.00 832.30 Q390.00 836.80 394.50 836.80 L409.75 836.80" class="l"/>
<path d="M414.75 836.80 l-8 -3.6 v7.2 Z" class="a"/>
<path d="M435.50 900.60 L433.50 902.60 Q431.50 904.60 428.67 904.60 L394.50 904.60 Q390.00 904.60 390.00 909.10 L390.00 923.10 Q390.00 927.60 394.50 927.60 L409.75 927.60" class="l"/>
<path d="M414.75 927.60 l-8 -3.6 v7.2 Z" class="a"/>
<path d="M435.50 1036.80 L433.50 1038.80 Q431.50 1040.80 428.67 1040.80 L394.50 1040.80 Q390.00 1040.80 390.00 1045.30 L390.00 1059.30 Q390.00 1063.80 394.50 1063.80 L409.75 1063.80" class="l"/>
<path d="M414.75 1063.80 l-8 -3.6 v7.2 Z" class="a"/>
<path d="M428.00 836.80 L443.50 836.80 Q448.00 836.80 448.00 841.30 L448.00 854.70 Q448.00 859.20 443.50 859.20 L407.50 859.20 Q403.00 859.20 403.00 863.70 L403.00 877.70 Q403.00 882.20 407.50 882.20 L423.00 882.20" class="l"/>
<path d="M428.00 882.20 l-8 -3.6 v7.2 Z" class="a"/>
<path d="M473.00 882.20 L488.50 882.20 Q493.00 882.20 493.00 886.70 L493.00 1126.60 Q493.00 1131.10 488.50 1131.10 L437.50 1131.10 Q433.00 1131.10 433.00 1135.60 L433.00 1150.10 Q433.00 1154.60 437.50 1154.60 L453.00 1154.60" class="l"/>
<path d="M458.00 1154.60 l-8 -3.6 v7.2 Z" class="a"/>
<path d="M425.00 927.60 L432.25 927.60 Q436.75 927.60 436.75 932.10 L436.75 945.50 Q436.75 950.00 432.25 950.00 L396.25 950.00 Q391.75 950.00 391.75 954.50 L391.75 968.50 Q391.75 973.00 396.25 973.00 L411.75 973.00" class="l"/>
<path d="M416.75 973.00 l-8 -3.6 v7.2 Z" class="a"/>
<path d="M427.25 973.00 L434.50 973.00 Q439.00 973.00 439.00 977.50 L439.00 990.90 Q439.00 995.40 434.50 995.40 L398.00 995.40 Q393.50 995.40 393.50 999.90 L393.50 1013.90 Q393.50 1018.40 398.00 1018.40 L413.50 1018.40" class="l"/>
<path d="M418.50 1018.40 l-8 -3.6 v7.2 Z" class="a"/>
<path d="M429.25 1018.40 L438.50 1018.40 Q443.00 1018.40 443.00 1022.90 L443.00 1128.85 Q443.00 1131.10 440.75 1131.10 L438.50 1131.10" class="l"/>
<path d="M428.00 1063.80 L443.50 1063.80 Q448.00 1063.80 448.00 1068.30 L448.00 1128.85 Q448.00 1131.10 445.75 1131.10 L443.50 1131.10" class="l"/>
<path d="M425.00 1109.20 L437.50 1109.20 Q442.00 1109.20 442.00 1113.70 L442.00 1131.10" class="l"/>
<path d="M488.00 1154.60 L904.00 1154.60 Q908.50 1154.60 908.50 1159.10 L908.50 1283.00" class="l"/>
<path d="M422.25 1245.40 L437.25 1245.40 Q441.75 1245.40 441.75 1249.90 L441.75 1263.30 Q441.75 1267.80 437.25 1267.80 L401.25 1267.80 Q396.75 1267.80 396.75 1272.30 L396.75 1283.00" class="l"/>
<path d="M391.75 973.00 L391.75 1041.80" class="l"/>
<path d="M393.30 1018.40 L393.30 1283.00" class="l"/>
<path d="M390.00 1063.80 L390.00 1283.00" class="l"/>
</svg>
</div>
<div class="vl" style="left:809.5px"></div>

</div>

<!-- inspector -->
<div class="abs" style="left:2015px;top:262px;width:573px;height:72px;border-radius:8px;background:#6f6d6c;overflow:hidden"><div class="abs" style="left:0;top:0;width:95px;height:72px;background:#1467c9"></div></div>
<!-- tab icons -->
<svg class="abs" style="left:2042px;top:275px" width="40" height="46" viewBox="0 0 40 46">
 <path d="M5 10.5 H35 Q36 10.5 36 11.5 V41 Q36 42 35 42 H5 Q4 42 4 41 V11.5 Q4 10.5 5 10.5 Z" fill="none" stroke="#f4f6fb" stroke-width="2"/>
 <rect x="7.2" y="13.6" width="25.6" height="25.2" fill="#fbfcfe"/>
 <path d="M12 14.5 V10 Q12 8.6 13.5 8.6 H15.4 Q15.6 4.2 20 4.2 Q24.4 4.2 24.6 8.6 H26.5 Q28 8.6 28 10 V14.5 Z" fill="#fbfcfe"/>
 <circle cx="20" cy="7.6" r="1.7" fill="#1467c9"/>
 <path d="M12.5 26.5 L18.3 32.2 L28.2 19.8" fill="none" stroke="#1467c9" stroke-width="4.2"/>
</svg>
<svg class="abs" style="left:2137px;top:277px" width="44" height="44" viewBox="0 0 44 44">
 <g transform="rotate(-45 22 22)">
  <rect x="0.6" y="14.9" width="42.8" height="14.2" rx="7.1" fill="none" stroke="#e6e6e6" stroke-width="3.7"/>
  <rect x="17.2" y="12" width="4.2" height="6" fill="#6f6d6c"/><rect x="22.6" y="26" width="4.2" height="6" fill="#6f6d6c"/>
  <rect x="12" y="18.8" width="20" height="6.4" rx="3.2" fill="#acacac"/>
 </g>
</svg>
<svg class="abs" style="left:2236px;top:278px" width="44" height="44" viewBox="0 0 44 44">
 <g stroke="#e6e6e6" stroke-width="4.4" stroke-linecap="round"><path d="M7.5 5 H23.5"/><path d="M5.5 13 H21.5"/><path d="M9 21 H20"/><path d="M5 29 H17"/><path d="M4 37 H20"/></g>
 <circle cx="29" cy="30" r="12.6" fill="#6f6d6c"/><circle cx="29" cy="30" r="11" fill="#e6e6e6"/>
 <text x="29" y="37" font-family="Liberation Sans,Arial,sans-serif" font-weight="bold" font-size="18.5" text-anchor="middle" fill="#6f6d6c" stroke="#6f6d6c" stroke-width="0.7">$</text>
</svg>
<svg class="abs" style="left:2332px;top:274px" width="46" height="48" viewBox="0 0 46 48">
 <path d="M33.2 13.2 A16.5 16.5 0 1 1 22.5 9.25" fill="none" stroke="#e6e6e6" stroke-width="4.2"/>
 <path d="M22.5 2.2 L31.5 8.5 L22.5 15.2 Z" fill="#e6e6e6"/>
 <text x="22.6" y="32.8" font-family="Liberation Sans,Arial,sans-serif" font-weight="bold" font-size="19" text-anchor="middle" fill="#e6e6e6">%</text>
</svg>
<svg class="abs" style="left:2430px;top:279px" width="40" height="40" viewBox="0 0 40 40">
 <g fill="#e6e6e6"><path d="M5.8 1.8 H26 V10 H5.8 A4.1 4.1 0 0 1 5.8 1.8 Z M29.8 1.8 H34.2 A4.1 4.1 0 0 1 34.2 10 H29.8 Z"/>
 <path d="M5.8 15.9 H26 V24.1 H5.8 A4.1 4.1 0 0 1 5.8 15.9 Z M29.8 15.9 H34.2 A4.1 4.1 0 0 1 34.2 24.1 H29.8 Z"/>
 <path d="M5.8 30 H26 V38.2 H5.8 A4.1 4.1 0 0 1 5.8 30 Z M29.8 30 H34.2 A4.1 4.1 0 0 1 34.2 38.2 H29.8 Z"/></g>
</svg>
<svg class="abs" style="left:2528px;top:280px" width="38" height="38" viewBox="0 0 38 38">
 <rect x="0.8" y="0.8" width="36.4" height="36.4" rx="2.2" fill="#e6e6e6"/>
 <path d="M5 32.5 L7.3 25.2 L22.3 10.2 L27.6 15.5 L12.6 30.5 Z M23.8 8.7 L27.2 5.3 Q28.2 4.5 29.2 5.3 L32.5 8.6 Q33.3 9.6 32.5 10.6 L29.1 14 Z" fill="#6a6868"/>
</svg>

<!-- rows -->
<svg class="itri" style="top:366px" width="15" height="19" viewBox="0 0 15 19"><path d="M0.3 0.5 V18.5 L14.5 9.5 Z" fill="#ebebeb"/></svg>
<div class="il b" style="top:360px">Título</div>
<div class="fld" style="top:356px">Wine tasting fundraiser</div>
<div class="isep" style="top:411px"></div>
<svg class="itri" style="top:441px" width="15" height="19" viewBox="0 0 15 19"><path d="M0.3 0.5 V18.5 L14.5 9.5 Z" fill="#ebebeb"/></svg>
<div class="il b" style="top:435px">Trabajo</div>
<div class="fld" style="top:431.3px"></div>
<div class="il" style="top:491px">Duración</div>
<div class="fld" style="top:487.4px"></div>
<div class="il" style="top:547px">Hito</div>
<div class="abs" style="left:2179.5px;top:550.3px;width:23.6px;height:23.6px;border-radius:5.5px;background:linear-gradient(#464343,#5f5c5c)"></div>
<div class="isep" style="top:599.5px"></div>
<div class="il" style="top:623.5px">Inicio</div>
<div class="pop" style="top:622.4px">Temprano<i></i></div>
<div class="il" style="top:678px">Temprano</div>
<div class="fld" style="top:676.4px;left:2181px;width:407px;height:31.4px;line-height:31.4px;padding-left:6.4px;border-bottom:1px solid #575454;font-size:23.6px;letter-spacing:0;border-radius:0 6px 6px 0;overflow:hidden">6 de diciembre de 2019, 0:00<i style="position:absolute;right:0;top:0;width:30px;height:100%;background:#1a68d3"></i></div>
<div class="il" style="top:735.5px">Fin</div>
<div class="pop" style="top:734.6px">Sin restricción<i></i></div>
<div class="il" style="top:791px">Alineación</div>
<div class="pop" style="top:790.4px"><span style="font-family:'DejaVu Sans',sans-serif;font-size:22px;display:inline-block;transform:translate(2px,-3px) scaleX(1.6);margin-right:3.5px">↳</span>LAP<i></i></div>
<!-- popup arrows -->
<svg class="abs" style="left:2559.5px;top:622.4px" width="28.5" height="31.5" viewBox="0 0 28.5 31.5"><path d="M8.8 12.2 L14.2 6.9 L19.6 12.2 M8.8 19.3 L14.2 24.6 L19.6 19.3" fill="none" stroke="#fff" stroke-width="2.3" stroke-linecap="round" stroke-linejoin="round"/></svg>
<svg class="abs" style="left:2559.5px;top:734.6px" width="28.5" height="31.5" viewBox="0 0 28.5 31.5"><path d="M8.8 12.2 L14.2 6.9 L19.6 12.2 M8.8 19.3 L14.2 24.6 L19.6 19.3" fill="none" stroke="#fff" stroke-width="2.3" stroke-linecap="round" stroke-linejoin="round"/></svg>
<svg class="abs" style="left:2559.5px;top:790.4px" width="28.5" height="31.5" viewBox="0 0 28.5 31.5"><path d="M8.8 12.2 L14.2 6.9 L19.6 12.2 M8.8 19.3 L14.2 24.6 L19.6 19.3" fill="none" stroke="#fff" stroke-width="2.3" stroke-linecap="round" stroke-linejoin="round"/></svg>
<svg class="abs" style="left:2558px;top:676.8px" width="30" height="30.6" viewBox="0 0 30 30.6"><path d="M9 12.3 L15 18.2 L21 12.3" fill="none" stroke="#fff" stroke-width="2.6" stroke-linecap="round" stroke-linejoin="round"/></svg>
<div class="isep" style="top:843px"></div>
<svg class="itri" style="top:873.5px" width="15" height="19" viewBox="0 0 15 19"><path d="M0.3 0.5 V18.5 L14.5 9.5 Z" fill="#ebebeb"/></svg>
<div class="il b" style="top:867.7px">Avanzado</div>
<div class="isep" style="top:919.3px"></div>
<svg class="abs" style="left:2022.5px;top:951.5px" width="19" height="15" viewBox="0 0 19 15"><path d="M0.5 0.3 H18.5 L9.5 14.5 Z" fill="#ebebeb"/></svg>
<div class="il b" style="top:943.5px">Esperado</div>
<div class="il" style="top:999.6px">Estado</div><div class="iv" style="top:999.6px">Futuro</div>
<div class="il" style="top:1055.4px">Inicio</div><div class="iv" style="top:1055.4px">6 dic 2019 0:00</div>
<div class="il" style="top:1111.5px">Fin</div><div class="iv" style="top:1111.5px">31 mar 2020 15:00</div>
<div class="il" style="top:1167.6px">Trabajo</div><div class="iv" style="top:1167.6px">8,17 meses</div>
<div class="il" style="top:1223px">Duración</div><div class="iv" style="top:1223px">4,14 meses (3,89 mesest)</div>
<div class="il" style="top:1279px">Uso</div>
<!-- logo -->
<svg class="abs" style="left:2150px;top:1508px" width="66" height="68" viewBox="0 0 66 68">
 <g fill="#434040" stroke="#242121" stroke-width="2.4" stroke-linejoin="round">
  <path d="M8 4.6 H59 Q63.5 5 62.2 9.4 Q61 13.6 56.5 15 H38 V4.6 Z"/>
  <path d="M38 18.6 H52 Q55.5 19.4 54.6 22.6 Q53.8 25.4 51 26 H40 Z"/>
  <path d="M46 29.6 H58 L62.6 33.4 L57.6 38.6 H49 Z"/>
  <path d="M10 4.6 Q4 5.6 4.6 10 Q5.4 13.6 9.6 14.4 Q6.6 18 8.6 21.6 Q10.4 24.4 14 24 Q12 27.4 14.6 30 L20 30 V4.6 Z"/>
  <ellipse cx="32.6" cy="53.2" rx="30" ry="12.4"/>
 </g>
 <ellipse cx="32.6" cy="51.6" rx="22" ry="6.4" fill="#242121"/>
 <path d="M19.4 50 Q16.4 30 19 14 Q20.4 3.6 22.6 2.6 Q30.4 4 36.4 18 Q42 34 46.6 47.4 Q40 53.4 32 53.6 Q24 53.4 19.4 50 Z" fill="#434040" stroke="#242121" stroke-width="2.6" stroke-linejoin="round"/>
 <path d="M24.4 48 Q22 29 23.6 15.6 Q24.6 9 26.2 10 Q31 16 34.6 26 Q38.6 38 41.4 46.6 Q32.6 51 24.4 48 Z" fill="#242121"/>
</svg>
<div class="abs" style="left:2234px;top:1518.6px;font-size:35.8px;line-height:44px;letter-spacing:1.25px;color:#272424;-webkit-text-stroke:1.2px #272424;white-space:nowrap">Merlin Project</div>

</body></html>
